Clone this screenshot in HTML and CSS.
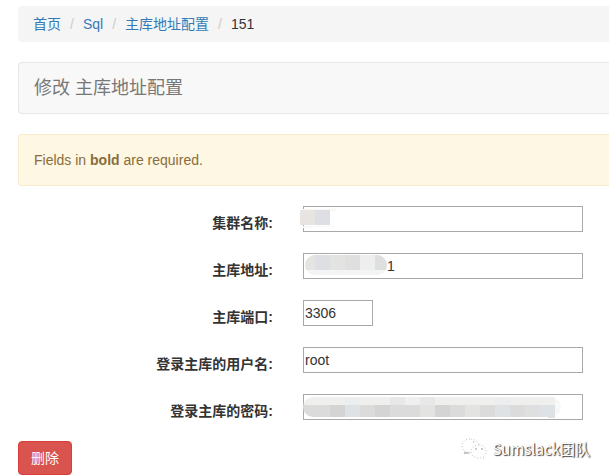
FILE: index.html
```html
<!DOCTYPE html>
<html lang="zh-CN">
<head>
<meta charset="utf-8">
<meta name="viewport" content="width=device-width, initial-scale=1">
<title>修改 主库地址配置</title>
<link rel="stylesheet" href="styles.css">
</head>
<body>
<main class="page">
  <nav class="breadcrumb" aria-label="breadcrumb">
    <ol class="crumbs">
      <li><a href="#">首页</a></li>
      <li><a href="#">Sql</a></li>
      <li><a href="#">主库地址配置</a></li>
      <li>151</li>
    </ol>
  </nav>
  <h1 class="panel">修改 主库地址配置</h1>
  <p class="alert">Fields in <strong>bold</strong> are required.</p>
  <form class="form">
    <div class="row">
      <label for="cluster">集群名称:</label>
      <div class="field">
        <input id="cluster" type="text">
        <svg class="mask mask-cluster" width="36" height="20" viewBox="0 0 36 20" shape-rendering="crispEdges" aria-hidden="true">
          <path fill="#f8f8f8" d="M3 1h33v2H3zM3 18h32v1H3zM3 19h8v1H3z"/>
          <path fill="#e8e4e1" d="M0 2h15v15H0z"/>
          <path fill="#dedfe4" d="M15 2h15v15H15z"/>
        </svg>
      </div>
    </div>
    <div class="row">
      <label for="host">主库地址:</label>
      <div class="field">
        <input id="host" class="masked" type="text" value="1">
        <svg class="mask mask-host" width="82" height="20" viewBox="0 0 82 20" aria-hidden="true">
          <clipPath id="pill"><rect width="82" height="20" rx="10"/></clipPath>
          <g clip-path="url(#pill)" shape-rendering="crispEdges">
            <path fill="#f3f4f4" d="M0 0h82v20H0z"/>
            <path fill="#e5e4e3" d="M0 0h10v15H0z"/>
            <path fill="#dddfe2" d="M10 0h15v15H10z"/>
            <path fill="#e3e3e1" d="M25 0h15v15H25z"/>
            <path fill="#dfdfdf" d="M40 0h15v15H40z"/>
            <path fill="#eeeeee" d="M55 0h15v15H55z"/>
            <path fill="#dee0df" d="M70 0h12v15H70z"/>
          </g>
        </svg>
      </div>
    </div>
    <div class="row">
      <label for="port">主库端口:</label>
      <div class="field"><input id="port" class="short" type="text" value="3306"></div>
    </div>
    <div class="row">
      <label for="user">登录主库的用户名:</label>
      <div class="field"><input id="user" type="text" value="root"></div>
    </div>
    <div class="row">
      <label for="password">登录主库的密码:</label>
      <div class="field">
        <input id="password" type="password">
        <svg class="mask mask-password" width="258" height="21" viewBox="0 0 258 21" aria-hidden="true">
          <clipPath id="bar"><path d="M10 0H252V21H245V20H10A10 10 0 0 1 10 0z"/></clipPath>
          <rect x="236" width="22" height="20" rx="10" fill="#f8f8f8"/>
          <g clip-path="url(#bar)" shape-rendering="crispEdges">
            <path fill="#efefee" d="M0 0h252v8H0z"/>
            <path fill="#ebedee" d="M42 0h15v8H42zM192 0h15v8h-15z"/>
            <path fill="#e8e8e8" d="M87 0h15v8H87zM117 0h15v8h-15z"/>
            <path fill="#dbdbdb" d="M0 8h252v13H0z"/>
            <path fill="#d5d4d4" d="M27 8h15v12H27zM72 8h15v12H72zM132 8h15v12h-15z"/>
            <path fill="#dfe2e5" d="M42 8h15v12H42zM192 8h15v12h-15zM237 8h15v13h-15z"/>
            <path fill="#e3e3e1" d="M117 8h15v12h-15zM162 8h15v12h-15z"/>
            <path fill="#dee0df" d="M222 8h15v12h-15z"/>
          </g>
        </svg>
      </div>
    </div>
    <button class="delete" type="button">删除</button>
  </form>
</main>
<div class="watermark">
  <svg width="26" height="22" viewBox="0 0 26 22" fill="#fff" stroke="#c4c4c4" stroke-width="1" stroke-dasharray="1 2" aria-hidden="true">
    <path d="M9 1C4 1 1 4 1 8c0 2 1 4 3 5l-1 3 3-2c1 .4 2 .5 4 .5 5 0 8-3 8-6.500S14 1 9 1z"/>
    <path d="M18 7c-4 0-8 2.500-8 6.500s4 6.500 8 6.500c1 0 2-.2 3-.5l2 1-.500-2c1.500-1.200 2.500-3 2.500-5 0-4-3.500-6.500-7-6.500z"/>
    <path stroke="#999" stroke-dasharray="none" d="M12 4h1M3 15h5M14 11h2M20 11h2"/>
  </svg>
  <span>Sumslack团队</span>
</div>
</body>
</html>
```
FILE: styles.css
```css
* {
  box-sizing: border-box;
}

body {
  margin: 0;
  background: #fff;
  color: #333;
  font: 14px/20px "Liberation Sans", "Noto Sans CJK SC", sans-serif;
}

.page {
  padding: 6px 0 0 18px;
}

a {
  color: #337ab7;
  text-decoration: none;
}

/* The bars bleed off the right side of the window. */
.breadcrumb,
.panel,
.alert {
  margin: 0 0 20px;
  border-radius: 4px 0 0 4px;
}

.breadcrumb {
  padding: 8px 15px;
  background: #f5f5f5;
}

.crumbs {
  display: flex;
  margin: 0;
  padding: 0;
  list-style: none;
}

.crumbs li + li::before {
  content: "/";
  padding: 0 9px;
  color: #ccc;
}

.panel,
.alert {
  padding: 15px;
  border: 1px solid #e7e7e7;
  border-right: 0;
}

.panel {
  background: #f8f8f8;
  color: #777;
  font-size: 18px;
  font-weight: 400;
  line-height: 20px;
}

.alert {
  border-color: #faebcc;
  background: #fdf7e3;
  color: #8a6d3b;
}

.form {
  display: grid;
  gap: 20px;
}

.row {
  display: grid;
  grid-template-columns: 255px 1fr;
  column-gap: 30px;
}

label {
  padding-top: 7px;
  font-weight: 700;
  text-align: right;
}

.field {
  position: relative;
}

input {
  display: block;
  width: 280px;
  height: 26px;
  padding: 1px;
  border: 1px solid #a9a9a9;
  border-radius: 0;
  background: #fff;
  color: #333;
  font: inherit;
}

.short {
  width: 70px;
}

.masked {
  padding-left: 83px;
}

.mask {
  position: absolute;
}

.mask-cluster {
  top: 2px;
  left: -3px;
}

.mask-host {
  top: 2px;
  left: 2px;
}

.mask-password {
  top: 3px;
  left: 0;
}

.delete {
  justify-self: start;
  padding: 6px 12px;
  border: 1px solid #d43f3a;
  border-radius: 4px;
  background: #d9534f;
  color: #fff;
  font: inherit;
}

.watermark {
  position: absolute;
  right: 19px;
  top: 438px;
  display: flex;
  align-items: center;
  gap: 5px;
  color: #fff;
  font: 15px/22px "Noto Sans CJK SC", sans-serif;
  text-shadow: 1px 1px 1px #444, 1px 0 1px #777;
}
```
